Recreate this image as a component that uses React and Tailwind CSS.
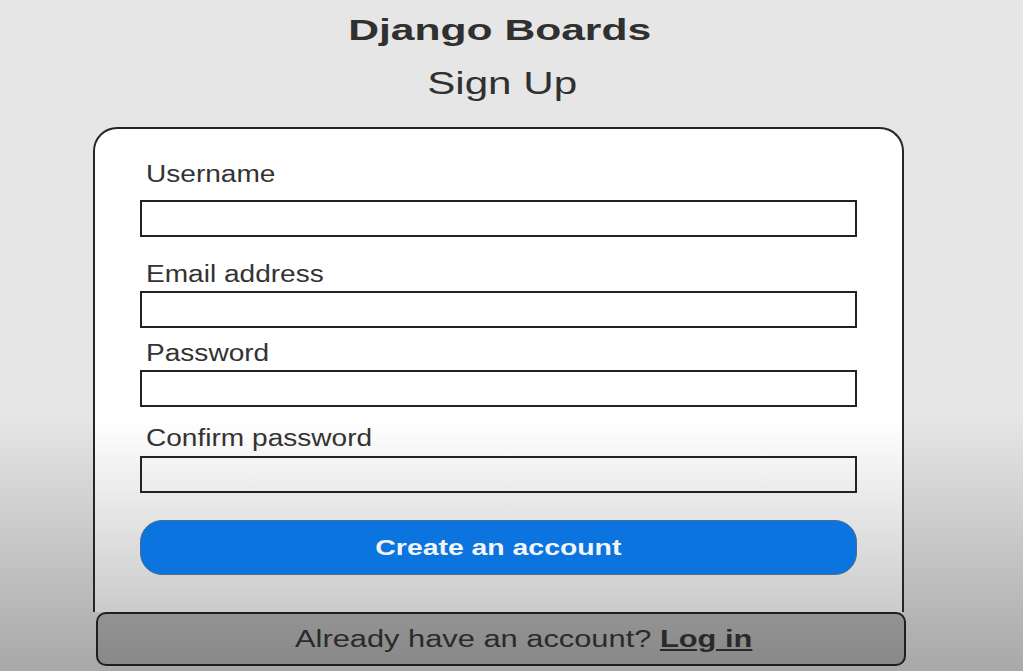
import React from 'react';

const fields = [
  { label: 'Username', type: 'text', labelGap: 'mt-0', inputGap: 'mt-[13px]' },
  { label: 'Email address', type: 'email', labelGap: 'mt-[24px]', inputGap: 'mt-[4px]' },
  { label: 'Password', type: 'password', labelGap: 'mt-[12px]', inputGap: 'mt-[4px]' },
  { label: 'Confirm password', type: 'password', labelGap: 'mt-[18px]', inputGap: 'mt-[5px]' },
];

const App = () => {
  return (
    <div
      className="h-screen w-full overflow-hidden bg-[linear-gradient(to_bottom,#e6e6e6_62%,#a8a8a8)] text-[#303030]"
      style={{ fontFamily: '"Liberation Sans", Arial, sans-serif' }}
    >
      <div className="w-[997px] flex flex-col items-center">
        {/* Heading */}
        <h1 className="mt-[13px] ml-[3px] text-[30px] leading-[34px] font-bold">
          <span className="inline-block scale-x-[1.42]">Django Boards</span>
        </h1>
        <h2 className="mt-[19px] ml-[7px] text-[31px] leading-[36px] font-normal">
          <span className="inline-block scale-x-[1.36]">Sign Up</span>
        </h2>

        {/* Card */}
        <div className="mt-[25px] w-[811px] rounded-t-[24px] border-2 border-b-0 border-[#262626] bg-[linear-gradient(to_bottom,#ffffff_60%,#cbcbcb)] px-[45px] pt-[32px] pb-[37px]">
          <form className="flex flex-col" onSubmit={(e) => e.preventDefault()}>
            {fields.map((f) => (
              <div key={f.label} className={`flex flex-col ${f.labelGap}`}>
                <label className="pl-[6px] text-[23px] leading-[26px] text-[#333]">
                  <span className="inline-block origin-left scale-x-[1.22]">{f.label}</span>
                </label>
                <input
                  type={f.type}
                  className={`${f.inputGap} h-[37px] w-full border-2 border-[#222] bg-transparent outline-none`}
                />
              </div>
            ))}

            <button
              type="submit"
              className="mt-[27px] h-[55px] w-full rounded-[22px] border border-[#4d6c8c] bg-[#0b74df] text-[22px] font-bold text-[#f2f4f7]"
            >
              <span className="inline-block scale-x-[1.29]">Create an account</span>
            </button>
          </form>
        </div>

        {/* Footer */}
        <div className="ml-[4px] flex h-[54px] w-[810px] items-center justify-center rounded-[10px] border-2 border-[#1f1f1f] bg-[linear-gradient(to_bottom,#939393,#898989)]">
          <p className="pl-[46px] text-[23px] leading-[26px] text-[#2a2a2a]">
            <span className="inline-block scale-x-[1.34]">
              Already have an account? <a href="#" className="font-bold underline">Log in</a>
            </span>
          </p>
        </div>
      </div>
    </div>
  );
};

export default App;
